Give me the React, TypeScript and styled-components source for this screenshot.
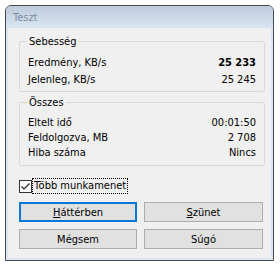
import React from "react";
import styled, { createGlobalStyle } from "styled-components";

const GlobalStyle = createGlobalStyle`
  html, body {
    margin: 0;
    padding: 0;
    background: #ffffff;
  }
  body {
    font-family: Tahoma, "DejaVu Sans Condensed", "DejaVu Sans", sans-serif;
    font-size: 11px;
    color: #000;
  }
`;

type Row = { label: string; value: string; bold?: boolean };

const speedRows: Row[] = [
  { label: "Eredmény, KB/s", value: "25 233", bold: true },
  { label: "Jelenleg, KB/s", value: "25 245" },
];

const totalRows: Row[] = [
  { label: "Eltelt idő", value: "00:01:50" },
  { label: "Feldolgozva, MB", value: "2 708" },
  { label: "Hiba száma", value: "Nincs" },
];

const App: React.FC = () => {
  return (
    <>
      <GlobalStyle />
      <Window>
        <TitleBar>Teszt</TitleBar>
        <Client>
          <Group $top={6} $bottom={3}>
            <Legend>Sebesség</Legend>
            {speedRows.map((r) => (
              <StatRow key={r.label} $height={17}>
                <span>{r.label}</span>
                <Value $bold={r.bold}>{r.value}</Value>
              </StatRow>
            ))}
          </Group>
          <Group $top={6} $bottom={5}>
            <Legend>Összes</Legend>
            {totalRows.map((r) => (
              <StatRow key={r.label} $height={15}>
                <span>{r.label}</span>
                <Value>{r.value}</Value>
              </StatRow>
            ))}
          </Group>
          <CheckRow>
            <CheckBox>
              <svg width="11" height="11" viewBox="0 0 11 11">
                <path
                  d="M1.5 5.5 L4 8 L9.5 2.5"
                  fill="none"
                  stroke="#222"
                  strokeWidth="1.2"
                />
              </svg>
            </CheckBox>
            <CheckLabel>Több munkamenet</CheckLabel>
          </CheckRow>
          <ButtonGrid>
            <Button $default>
              <u>H</u>áttérben
            </Button>
            <Button>
              <u>S</u>zünet
            </Button>
            <Button>Mégsem</Button>
            <Button>Súgó</Button>
          </ButtonGrid>
        </Client>
      </Window>
    </>
  );
};

const Window = styled.div`
  margin: 5px;
  width: 269px;
  height: 256px;
  box-sizing: border-box;
  border: 1px solid #4a4a4a;
  border-radius: 6px 6px 0 0;
  background: #dbe6f3;
  padding: 0 2px 2px 2px;
  display: flex;
  flex-direction: column;
`;

const TitleBar = styled.div`
  height: 22px;
  flex: none;
  display: flex;
  align-items: center;
  margin: 0 -2px;
  padding-left: 7px;
  font-family: "Segoe UI", "DejaVu Sans Condensed", "DejaVu Sans", sans-serif;
  font-size: 11px;
  color: #7d8da0;
  background: linear-gradient(#bccbdc, #d9e5f2);
  border-radius: 5px 5px 0 0;
`;

const Client = styled.div`
  flex: 1;
  background: #f0f0f0;
  padding: 7px 6px 0 11px;
  display: flex;
  flex-direction: column;
`;

const Group = styled.fieldset<{ $top: number; $bottom: number }>`
  margin: 0 0 4px 0;
  padding: ${(p) => p.$top}px 8px ${(p) => p.$bottom}px 8px;
  border: 1px solid #d9d9d9;
  border-radius: 2px;
  min-width: 0;
`;

const Legend = styled.legend`
  padding: 0 2px;
  margin-left: -1px;
  line-height: 13px;
`;

const StatRow = styled.div<{ $height: number }>`
  display: flex;
  justify-content: space-between;
  align-items: center;
  height: ${(p) => p.$height}px;
`;

const Value = styled.span<{ $bold?: boolean }>`
  font-weight: ${(p) => (p.$bold ? 700 : 400)};
`;

const CheckRow = styled.div`
  display: flex;
  align-items: center;
  height: 16px;
  margin: 8px 0 0 0;
`;

const CheckBox = styled.span`
  width: 11px;
  height: 11px;
  border: 1px solid #333;
  background: #fff;
  display: flex;
  align-items: center;
  justify-content: center;
  flex: none;
`;

const CheckLabel = styled.span`
  margin-left: 1px;
  padding: 0 1px;
  line-height: 14px;
  outline: 1px dotted #000;
`;

const ButtonGrid = styled.div`
  display: grid;
  grid-template-columns: 118px 119px;
  column-gap: 7px;
  row-gap: 7px;
  margin-top: 8px;
`;

const Button = styled.div<{ $default?: boolean }>`
  height: 20px;
  box-sizing: border-box;
  display: flex;
  align-items: center;
  justify-content: center;
  background: #e1e1e1;
  border: ${(p) => (p.$default ? "2px solid #0078d7" : "1px solid #adadad")};
  font-size: 11px;
`;

export default App;
